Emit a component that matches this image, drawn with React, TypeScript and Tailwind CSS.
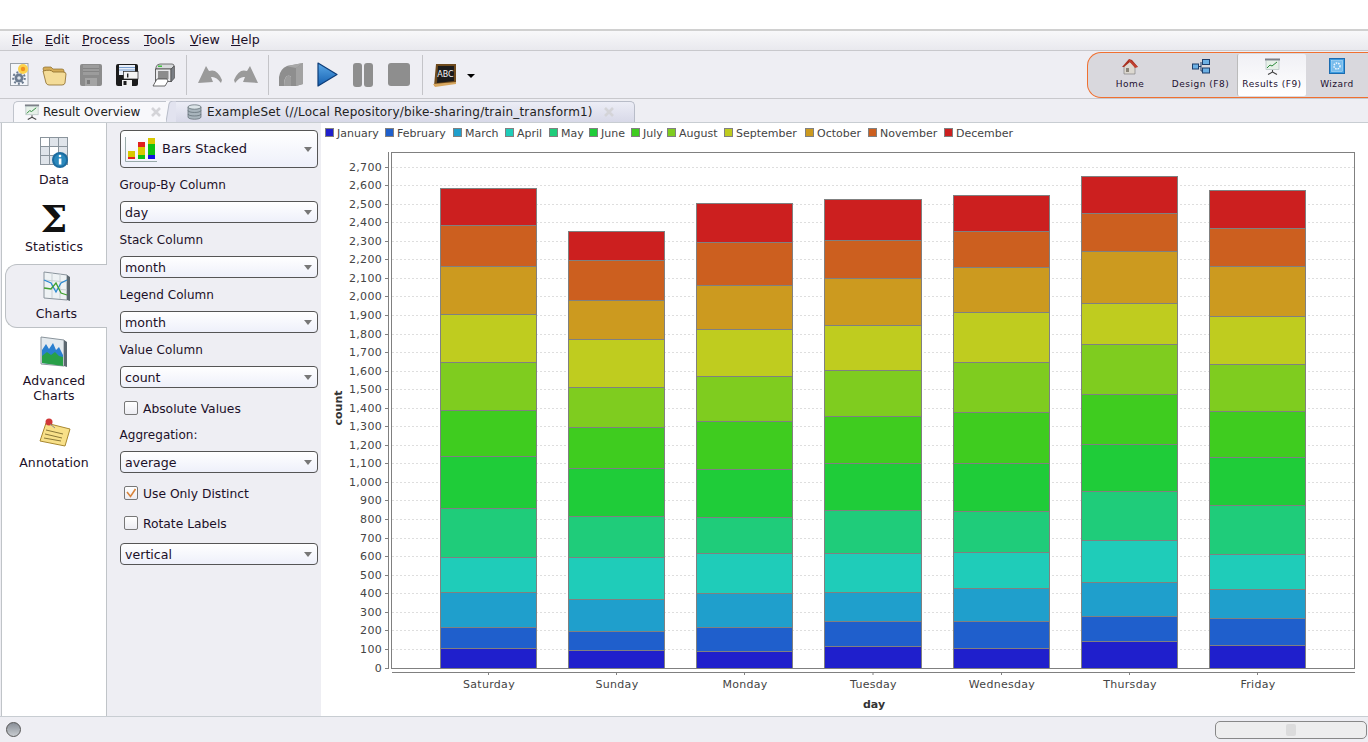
import React from 'react';

const months = ['January', 'February', 'March', 'April', 'May', 'June', 'July', 'August', 'September', 'October', 'November', 'December'];
const colors = ['#1f1fcc', '#1f5fcc', '#1f9fcc', '#1fccb9', '#1fcc7a', '#1fcc39', '#3fcc1f', '#7fcc1f', '#bfcc1f', '#cc9a1f', '#cc5f1f', '#cc1f1f'];
const legendX = [325, 385, 453, 505, 549, 589, 631, 667, 724, 805, 868, 944];

// pixel tops of each segment, January first
const bars = [
    { day: 'Saturday', x: 440, w: 96, tops: [648, 627, 592, 557, 508, 456, 410, 362, 314, 266, 225, 188] },
    { day: 'Sunday', x: 568, w: 96, tops: [650, 631, 599, 557, 516, 468, 427, 387, 339, 300, 260, 231] },
    { day: 'Monday', x: 696, w: 96, tops: [651, 627, 593, 553, 517, 469, 421, 376, 329, 285, 242, 203] },
    { day: 'Tuesday', x: 824, w: 97, tops: [646, 621, 592, 553, 510, 463, 416, 370, 325, 278, 240, 199] },
    { day: 'Wednesday', x: 953, w: 96, tops: [648, 621, 588, 552, 511, 463, 412, 362, 312, 267, 231, 195] },
    { day: 'Thursday', x: 1081, w: 96, tops: [641, 616, 582, 540, 491, 444, 394, 344, 303, 251, 213, 176] },
    { day: 'Friday', x: 1209, w: 96, tops: [645, 618, 589, 554, 505, 457, 411, 364, 316, 266, 228, 190] },
];

const ticks = Array.from({ length: 28 }, (_, i) => i * 100);
const tickY = (v: number) => (v === 0 ? 668 : Math.floor(667.9 - v * 0.1855));

const Chart: React.FC = () => (
    <svg width={1046} height={593} viewBox="321 123 1046 593" className="block">
        {months.map((m, i) => (
            <g key={m}>
                <rect x={legendX[i] + 0.5} y={128.5} width={8} height={8} fill={colors[i]} stroke="#808080" />
                <text x={legendX[i] + 12} y={137} fontSize={11} fill="#444">{m}</text>
            </g>
        ))}
        <rect x={391.5} y={152.5} width={963} height={516} fill="#fff" stroke="#808080" />
        {ticks.map((v) => (
            <g key={v}>
                {v > 0 && <line x1={392} x2={1354} y1={tickY(v) + 0.5} y2={tickY(v) + 0.5} stroke="#dedede" strokeDasharray="2 2" />}
                <line x1={385} x2={388} y1={tickY(v) + 0.5} y2={tickY(v) + 0.5} stroke="#808080" />
                <text x={382} y={tickY(v) + 4} fontSize={11} fill="#444" textAnchor="end" letterSpacing={0.3}>{v.toLocaleString('en-US')}</text>
            </g>
        ))}
        <line x1={388.5} x2={388.5} y1={152} y2={669} stroke="#808080" />
        {bars.map((b) => (
            <g key={b.day}>
                {b.tops.map((t, i) => {
                    const bottom = i === 0 ? 668 : b.tops[i - 1];
                    return <rect key={i} x={b.x + 0.5} y={t + 0.5} width={b.w} height={bottom - t} fill={colors[i]} stroke="#808080" />;
                })}
                <line x1={b.x + b.w / 2 + 0.5} x2={b.x + b.w / 2 + 0.5} y1={672} y2={675} stroke="#808080" />
                <text x={b.x + b.w / 2 + 1} y={688} fontSize={11} fill="#444" textAnchor="middle" letterSpacing={0.3}>{b.day}</text>
            </g>
        ))}
        <line x1={392} x2={1355} y1={672.5} y2={672.5} stroke="#808080" />
        <text x={874} y={708} fontSize={11} fontWeight="bold" fill="#333" textAnchor="middle">day</text>
        <text transform="translate(342 408) rotate(-90)" fontSize={11} fontWeight="bold" fill="#333" textAnchor="middle">count</text>
    </svg>
);

const Floppy: React.FC<{ dark?: boolean }> = ({ dark }) => (
    <svg width="24" height="24" viewBox="0 0 24 24">
        <path d="M1 3q0-2 2-2h18q2 0 2 2v18q0 2-2 2H3q-2 0-2-2z" fill={dark ? '#1c1c1c' : '#8c8c8c'} />
        {dark ? (
            <>
                <rect x="4" y="2" width="16" height="10" fill="#e8eef8" />
                <rect x="4" y="4" width="16" height="1" fill="#7aa0d0" />
                <rect x="4" y="6.5" width="16" height="1" fill="#7aa0d0" />
                <rect x="8.5" y="8.5" width="14.5" height="7.5" fill="#f4f4f4" stroke="#222" strokeWidth="0.7" />
                <rect x="12" y="10.5" width="1.4" height="4" fill="#222" />
                <rect x="7" y="17" width="10" height="6" fill="#f0f0f0" />
                <rect x="8.5" y="18" width="3" height="4" fill="#1c1c1c" />
            </>
        ) : (
            <>
                <rect x="4" y="2" width="16" height="10" fill="#9c9c9c" />
                <rect x="4" y="5" width="16" height="1" fill="#848484" />
                <rect x="4" y="8" width="16" height="1" fill="#848484" />
                <rect x="6" y="15" width="12" height="8" fill="#a4a4a4" />
                <rect x="8" y="17" width="3" height="4" fill="#7c7c7c" />
            </>
        )}
    </svg>
);

const Btn: React.FC<{ children: React.ReactNode }> = ({ children }) => (
    <div className="w-9 h-full flex items-center justify-center shrink-0">{children}</div>
);

const Sep: React.FC<{ className: string }> = ({ className }) => <div className={`w-px h-10 bg-[#c4c4c8] shrink-0 ${className}`} />;

const Toolbar: React.FC = () => (
    <div className="h-[48px] border-b border-[#c8c8cc] flex items-center pl-px bg-[#eeeef3] relative">
        <Btn>
            <svg width="24" height="26" viewBox="0 0 24 26">
                <rect x="3.5" y="1.5" width="17.5" height="22" fill="#f4f6fa" stroke="#9aa0a8" />
                <circle cx="12" cy="16" r="4.5" fill="#6c7c90" />
                <circle cx="12" cy="16" r="1.8" fill="#dfe6ee" />
                <circle cx="12" cy="16" r="5.8" fill="none" stroke="#6c7c90" strokeWidth="2" strokeDasharray="2 2" />
                <circle cx="16" cy="7" r="5" fill="#fbd24c" />
                <circle cx="16" cy="7" r="2.2" fill="#f09020" />
            </svg>
        </Btn>
        <Btn>
            <svg width="26" height="24" viewBox="0 0 26 24">
                <path d="M1 6q0-2 2-2h6l2 2h9q2 0 2 2v3H3z" fill="#d4ac58" stroke="#8a6a28" strokeWidth="0.7" />
                <path d="M1 8q8-2 10 1h10q3 0 3 2l-1 9q-.5 2-3 2H7q-2 0-3-2z" fill="#f4dc98" stroke="#8a6a28" strokeWidth="0.8" />
            </svg>
        </Btn>
        <Btn><Floppy /></Btn>
        <Btn><Floppy dark /></Btn>
        <Btn>
            <svg width="24" height="26" viewBox="0 0 24 26">
                <path d="M5 5Q6 2 9 2H21Q23 2 23 4L20 7H5z" fill="#d8dadc" stroke="#555" strokeWidth="0.8" />
                <rect x="4.5" y="7" width="15.5" height="12.5" fill="#e8e8ea" stroke="#444" strokeWidth="0.8" />
                <rect x="7" y="9" width="10.5" height="8" fill="#8c8c8c" />
                <path d="M20 7L23.5 4V16L20 20z" fill="#7a7e84" stroke="#444" strokeWidth="0.6" />
                <path d="M6 17h10l1 2-3 5H2z" fill="#fff" stroke="#444" strokeWidth="0.8" />
                <rect x="7" y="3.5" width="4" height="1.5" fill="#40c040" />
            </svg>
        </Btn>
        <Sep className="ml-[5px] mr-[5px]" />
        <Btn>
            <svg width="26" height="20" viewBox="0 0 26 20">
                <path d="M1 18L9 1l3 5q8-3 13 9l-1 3q-5-7-10-6l2 5z" fill="#9a9a9a" />
            </svg>
        </Btn>
        <Btn>
            <svg width="26" height="20" viewBox="0 0 26 20">
                <path d="M25 18L17 1l-3 5Q6 3 1 15l1 3q5-7 10-6l-2 5z" fill="#9a9a9a" />
            </svg>
        </Btn>
        <Sep className="ml-[4px] mr-[4px]" />
        <Btn>
            <svg width="26" height="25" viewBox="0 0 26 25">
                <path d="M1 24V15Q2 7 9 4L25 1V22L18 24H13V15Q12 13 9 14Q6 16 6 24z" fill="#8e8e8e" />
                <path d="M9 4L25 1L18 6Q12 5 9 4z" fill="#a8a8a8" />
                <path d="M6 24Q6 16 9 14Q12 13 13 15V24z" fill="#9c9c9c" />
                <path d="M18 6L25 1V22L18 24z" fill="#a2a2a2" />
            </svg>
        </Btn>
        <Btn>
            <svg width="22" height="25" viewBox="0 0 22 25">
                <defs>
                    <linearGradient id="play" x1="0" y1="0" x2="0" y2="1">
                        <stop offset="0" stopColor="#5aa8e8" />
                        <stop offset="1" stopColor="#1560b0" />
                    </linearGradient>
                </defs>
                <path d="M2 1l19 11.5L2 24z" fill="url(#play)" stroke="#0c3c78" strokeWidth="1.2" strokeLinejoin="round" />
            </svg>
        </Btn>
        <Btn>
            <div className="flex gap-[2px]">
                <div className="w-[9px] h-[24px] rounded-[3px] bg-[#8e8e8e]" />
                <div className="w-[9px] h-[24px] rounded-[3px] bg-[#8e8e8e]" />
            </div>
        </Btn>
        <Btn><div className="w-[22px] h-[23px] rounded-[3px] bg-[#8e8e8e]" /></Btn>
        <Sep className="ml-[5px] mr-[4px]" />
        <Btn>
            <svg width="24" height="24" viewBox="0 0 24 24">
                <path d="M3 1h20v19L1 23z" fill="#6e4a1c" />
                <path d="M5 3h16v15L4 20z" fill="#1c1c1c" />
                <path d="M0 21l23-2v2L2 24z" fill="#d8a860" />
                <text x="12.5" y="14" fontSize="8" fill="#f4f4f4" textAnchor="middle">ABC</text>
            </svg>
        </Btn>
        <div className="w-0 h-0 ml-[4px] mt-[3px] border-x-[4px] border-x-transparent border-t-[4px] border-t-black" />
        <Perspectives />
    </div>
);

const Perspectives: React.FC = () => {
    const items = [
        {
            label: 'Home', w: 'w-[68px]',
            icon: (
                <svg width="18" height="17" viewBox="0 0 18 17">
                    <path d="M3 8v8h11V8L8 3z" fill="#dcd8d0" stroke="#777" strokeWidth="0.6" />
                    <path d="M1 9l7-8 3 1 6 7-3-.5L9 4 3 9z" fill="#a83020" />
                    <path d="M8 1l9 8-3 1-6-7z" fill="#c04030" />
                    <rect x="5" y="10" width="3" height="4" fill="#8a8478" />
                </svg>
            ),
        },
        {
            label: 'Design (F8)', w: 'w-[73px]',
            icon: (
                <svg width="18" height="15" viewBox="0 0 18 15">
                    <path d="M6 7.5h3M9 3v9h2" stroke="#1c3f6c" fill="none" />
                    <rect x="0.5" y="5" width="6" height="5" fill="#6cb0e4" stroke="#1c3f6c" />
                    <rect x="10.5" y="0.5" width="7" height="5" fill="#6cb0e4" stroke="#1c3f6c" />
                    <rect x="10.5" y="9" width="7" height="5" fill="#6cb0e4" stroke="#1c3f6c" />
                </svg>
            ),
        },
        {
            label: 'Results (F9)', w: 'w-[69px]', active: true,
            icon: (
                <svg width="15" height="17" viewBox="0 0 15 17">
                    <rect x="0" y="0.5" width="15" height="2" fill="#7c8088" />
                    <rect x="1" y="2.5" width="13" height="9" fill="#e6f0e8" stroke="#9aa" strokeWidth="0.5" />
                    <path d="M2 10l3-3 2 1 5-4" stroke="#2a8a3a" fill="none" strokeWidth="1" />
                    <path d="M7.5 12v2M7.5 14L3 16.5M7.5 14L12 16.5" stroke="#444" strokeWidth="1.1" />
                </svg>
            ),
        },
        {
            label: 'Wizard', w: 'w-[62px]',
            icon: (
                <svg width="16" height="16" viewBox="0 0 16 16">
                    <rect x="0.5" y="0.5" width="15" height="15" fill="#3c9ce0" stroke="#1c6cb0" />
                    <rect x="2.5" y="2.5" width="11" height="11" fill="#78bcec" stroke="#c8e4f8" strokeWidth="0.5" />
                    <circle cx="8" cy="8" r="3" fill="none" stroke="#f0f8ff" strokeWidth="1.5" strokeDasharray="1.5 1" />
                </svg>
            ),
        },
    ];
    return (
        <div className="absolute right-0 top-px w-[281px] h-[46px] bg-[#d9d8dd] border border-r-0 border-[#f07030] rounded-l-[14px] flex items-center justify-end">
            {items.map((it) => (
                <div key={it.label} className={`${it.w} h-[42px] flex flex-col items-center justify-start pt-[2px] gap-[1px] ${it.active ? 'bg-linear-to-b from-[#f0f0f5] to-white border-l border-[#bbb] rounded-[2px]' : ''}`}>
                    <div className="h-[20px] flex items-center">{it.icon}</div>
                    <div className="text-[9px] leading-[14px] tracking-[0.5px] text-[#1c1030] whitespace-nowrap">{it.label}</div>
                </div>
            ))}
        </div>
    );
};

const CloseX: React.FC = () => (
    <svg width="10" height="10" viewBox="0 0 10 10">
        <path d="M1 1l8 8M9 1l-8 8" stroke="#d4d4d8" strokeWidth="2.6" />
    </svg>
);

const Tabs: React.FC = () => (
    <div className="h-[24px] flex items-end bg-[#eeeef3] pl-[13px] border-b border-[#c8cdd2]">
        <div className="h-[21px] w-[153px] bg-[#f8f8fb] border-l border-t border-[#c0c4cc] rounded-tl-[5px] flex items-center pl-[10px] shrink-0">
            <svg width="16" height="16" viewBox="0 0 15 17">
                <rect x="0" y="0.5" width="15" height="2" fill="#7c8088" />
                <rect x="1" y="2.5" width="13" height="9" fill="#e6f0e8" stroke="#9aa" strokeWidth="0.5" />
                <path d="M2 10l3-3 2 1 5-4" stroke="#2a8a3a" fill="none" strokeWidth="1" />
                <path d="M7.5 12v2M7.5 14L3 16.5M7.5 14L12 16.5" stroke="#444" strokeWidth="1.1" />
            </svg>
            <span className="ml-[3px] text-[12px] text-[#222] whitespace-nowrap">Result Overview</span>
            <span className="ml-[11px] flex"><CloseX /></span>
        </div>
        <svg width="10" height="21" viewBox="0 0 10 21" className="shrink-0">
            <path d="M0 21V0h3L0 21z" fill="#f8f8fb" />
            <path d="M0 21L3 3q.5-3 4-3h3v21z" fill="#e2e3ef" />
            <path d="M0 21L3 3q.5-3 4-3h3" fill="none" stroke="#b8bcc8" />
        </svg>
        <div className="h-[21px] w-[459px] bg-linear-to-b from-[#ecedf6] to-[#d8d9e8] border-t border-r border-[#b8bcc8] rounded-tr-[5px] flex items-center pl-[11px] shrink-0">
            <svg width="15" height="16" viewBox="0 0 15 16">
                <path d="M1 3v10c0 3 13 3 13 0V3z" fill="#a8b4bc" stroke="#5c6870" strokeWidth="0.7" />
                <ellipse cx="7.5" cy="3" rx="6.5" ry="2.2" fill="#dce4e8" stroke="#5c6870" strokeWidth="0.7" />
                <path d="M1 6.5c0 2.6 13 2.6 13 0M1 10c0 2.6 13 2.6 13 0" fill="none" stroke="#5c6870" strokeWidth="0.7" />
            </svg>
            <span className="ml-[5px] text-[12px] tracking-[0.19px] text-[#222] whitespace-nowrap">ExampleSet (//Local Repository/bike-sharing/train_transform1)</span>
            <span className="ml-[11px] flex"><CloseX /></span>
        </div>
    </div>
);

const Arrow: React.FC = () => (
    <div className="w-0 h-0 border-x-[4px] border-x-transparent border-t-[5px] border-t-[#777] shrink-0" />
);

const Select: React.FC<{ value: string; className?: string }> = ({ value, className }) => (
    <div className={`h-[22px] ml-[13px] mr-[3px] border border-[#555] rounded-[4px] bg-linear-to-b from-white to-[#eef0fa] flex items-center justify-between pl-[4px] pr-[5px] text-[12.6px] text-[#1c1028] ${className ?? ''}`}>
        <span className="mt-[2px]">{value}</span>
        <Arrow />
    </div>
);

const Label: React.FC<{ text: string; className?: string }> = ({ text, className }) => (
    <div className={`h-[16px] leading-[18px] ml-[12.5px] text-[12px] tracking-[0.05px] text-[#1c1028] ${className ?? ''}`}>{text}</div>
);

const Check: React.FC<{ text: string; checked?: boolean; className?: string }> = ({ text, checked, className }) => (
    <div className={`h-[16px] ml-[17px] flex items-center gap-[5px] text-[12.3px] text-[#1c1028] ${className ?? ''}`}>
        <div className="w-[14px] h-[14px] border border-[#777] rounded-[2px] bg-linear-to-b from-white to-[#ececf2] flex items-center justify-center">
            {checked && (
                <svg width="10" height="10" viewBox="0 0 10 10">
                    <path d="M1 4l3.5 4.5L9.5 1" fill="none" stroke="#d8843c" strokeWidth="1.6" />
                </svg>
            )}
        </div>
        <span className="mt-[2px]">{text}</span>
    </div>
);

const Options: React.FC = () => (
    <div className="w-[214px] shrink-0 bg-[#eeeef3] pt-[7px]">
        <div className="h-[38px] ml-[13px] mr-[3px] border border-[#555] rounded-[4px] bg-linear-to-b from-white to-[#eef0fa] flex items-center justify-between pl-[4px] pr-[5px]">
            <div className="flex items-center">
                <svg width="32" height="25" viewBox="0 0 32 25">
                    <path d="M0.5 0v24.5H32" fill="none" stroke="#9aa" />
                    <rect x="3" y="14" width="7" height="6" fill="#d8c800" />
                    <rect x="3" y="20" width="7" height="2" fill="#e02020" />
                    <rect x="13" y="5" width="7" height="5" fill="#e02020" />
                    <rect x="13" y="10" width="7" height="8" fill="#d8c800" />
                    <rect x="13" y="18" width="7" height="4" fill="#10c010" />
                    <rect x="23" y="1" width="7" height="6" fill="#d8c800" />
                    <rect x="23" y="7" width="7" height="7" fill="#10c010" />
                    <rect x="23" y="14" width="7" height="4" fill="#10c010" />
                    <rect x="23" y="18" width="7" height="4" fill="#1010e0" />
                </svg>
                <span className="ml-[5px] text-[13px] text-[#1c1028]">Bars Stacked</span>
            </div>
            <Arrow />
        </div>
        <Label text="Group-By Column" className="mt-[8px]" />
        <Select value="day" className="mt-[9px]" />
        <Label text="Stack Column" className="mt-[8px]" />
        <Select value="month" className="mt-[9px]" />
        <Label text="Legend Column" className="mt-[8px]" />
        <Select value="month" className="mt-[9px]" />
        <Label text="Value Column" className="mt-[8px]" />
        <Select value="count" className="mt-[9px]" />
        <Check text="Absolute Values" className="mt-[12px]" />
        <Label text="Aggregation:" className="mt-[10px]" />
        <Select value="average" className="mt-[9px]" />
        <Check text="Use Only Distinct" checked className="mt-[12px]" />
        <Check text="Rotate Labels" className="mt-[14px]" />
        <Select value="vertical" className="mt-[12px]" />
    </div>
);

const SideItem: React.FC<{ label: React.ReactNode; icon: React.ReactNode; active?: boolean; className?: string }> = ({ label, icon, active, className }) => (
    <div className={`flex flex-col items-center text-[12.5px] leading-[15px] tracking-[0.1px] text-[#1c1028] text-center ${active ? 'ml-[3px] bg-[#eeeef3] border border-r-0 border-[#bcc0c4] rounded-l-[12px] -mr-px z-10' : ''} ${className ?? ''}`}>
        {icon}
        <div>{label}</div>
    </div>
);

const Sidebar: React.FC = () => (
    <div className="w-[106px] shrink-0 ml-px bg-white border-l border-r border-[#c0c4c8] flex flex-col pt-[7px] relative">
        <SideItem
            className="h-[67px] pt-[6px]"
            label="Data"
            icon={
                <svg width="32" height="35" viewBox="0 0 32 35" className="mb-[1px]">
                    <rect x="2.5" y="1.5" width="27" height="27" fill="#dfe4ea" stroke="#8a949c" />
                    <path d="M11.5 1.5v27M20.5 1.5v27M2.5 10.5h27M2.5 19.5h27" stroke="#8a949c" />
                    <rect x="3" y="2" width="8" height="8" fill="#fff" />
                    <rect x="12" y="11" width="8" height="8" fill="#fff" />
                    <circle cx="22" cy="24" r="8" fill="#1c6ca0" />
                    <circle cx="22" cy="24" r="6" fill="#2a88bc" />
                    <circle cx="22" cy="20" r="1.3" fill="#fff" />
                    <rect x="20.8" y="22.5" width="2.6" height="6" fill="#fff" />
                </svg>
            }
        />
        <SideItem
            className="h-[67px]"
            label="Statistics"
            icon={<div className="h-[42px] font-['DejaVu_Serif',serif] font-bold text-[38px] leading-[43px] text-[#111]">Σ</div>}
        />
        <SideItem
            active
            className="h-[64px] pt-[5px]"
            label="Charts"
            icon={
                <svg width="32" height="34" viewBox="0 0 32 34" className="mb-[2px]">
                    <path d="M3 2l23 3v25L3 28z" fill="#eef2f4" stroke="#8a949c" />
                    <path d="M26 5l3 2v24l-3-1z" fill="#5c6870" />
                    <path d="M3 10l23 2M3 18l23 2M11 3v25M19 4v25" stroke="#c8d0d4" />
                    <path d="M3 10l7 3 5 9 5-9 6-3" fill="none" stroke="#2a88d0" strokeWidth="1.3" />
                    <path d="M3 18l7 1 5-6 5 10 6 2" fill="none" stroke="#40a030" strokeWidth="1.3" />
                </svg>
            }
        />
        <SideItem
            className="h-[83px] mt-[3px] pt-[3px]"
            label={<>Advanced<br />Charts</>}
            icon={
                <svg width="32" height="34" viewBox="0 0 32 34" className="mb-[3px] mt-[2px]">
                    <path d="M3 1l23 3v26L3 28z" fill="#e4eaee" stroke="#8a949c" />
                    <path d="M26 4l3 2v25l-3-1z" fill="#5c6870" />
                    <path d="M4 14l4-6 3 5 4-6 3 7 3-3 4 8v10L4 27z" fill="#2a80d0" />
                    <path d="M4 20l5-4 4 3 4-3 4 4 4 1v9L4 27z" fill="#28a048" />
                </svg>
            }
        />
        <SideItem
            className="pt-[4px]"
            label="Annotation"
            icon={
                <svg width="34" height="31" viewBox="0 0 34 31" className="mb-[6px]">
                    <path d="M9 5l24 6-5 17-25-5z" fill="#f8e088" stroke="#a88830" />
                    <path d="M9 12l17 4M8 16l17 4M7 20l17 3" stroke="#8a7838" />
                    <circle cx="12" cy="4" r="3.5" fill="#d03838" />
                    <path d="M13 6l5 4" stroke="#888" />
                </svg>
            }
        />
    </div>
);

const menu = [
    { name: 'File', w: 'w-[33px]' },
    { name: 'Edit', w: 'w-[37px]' },
    { name: 'Process', w: 'w-[62px]' },
    { name: 'Tools', w: 'w-[46px]' },
    { name: 'View', w: 'w-[41px]' },
    { name: 'Help', w: 'w-[40px]' },
];

const App: React.FC = () => (
    <div className="w-[1368px] h-[742px] overflow-hidden flex flex-col bg-white font-['DejaVu_Sans',sans-serif]">
        <div className="h-[29px] shrink-0 bg-white" />
        <div className="h-[22px] shrink-0 border-t-2 border-b border-t-[#d0d0d0] border-b-[#c8c8cc] bg-linear-to-b from-[#f8f8fa] to-[#e9e9ee] flex items-center pl-[12px] text-[12.6px] text-[#1c1028]">
            {menu.map((m) => (
                <span key={m.name} className={m.w}><span className="underline">{m.name[0]}</span>{m.name.slice(1)}</span>
            ))}
        </div>
        <Toolbar />
        <Tabs />
        <div className="flex-1 flex min-h-0 bg-[#eeeef3]">
            <Sidebar />
            <Options />
            <div className="flex-1 bg-white h-[593px]"><Chart /></div>
        </div>
        <div className="h-[26px] shrink-0 bg-[#eeeef3] border-t border-[#c8cdd2] flex items-center justify-between pl-[6px] pr-px">
            <div className="w-[15px] h-[15px] rounded-full border border-[#555] bg-linear-to-b from-[#8a9098] to-[#c8ccd0]" />
            <div className="w-[152px] h-[18px] border border-[#888] rounded-[5px] bg-[#eeeeee] flex items-center justify-center">
                <div className="w-[10px] h-[12px] rounded-[2px] bg-[#dcdcdc]" />
            </div>
        </div>
    </div>
);

export default App;
